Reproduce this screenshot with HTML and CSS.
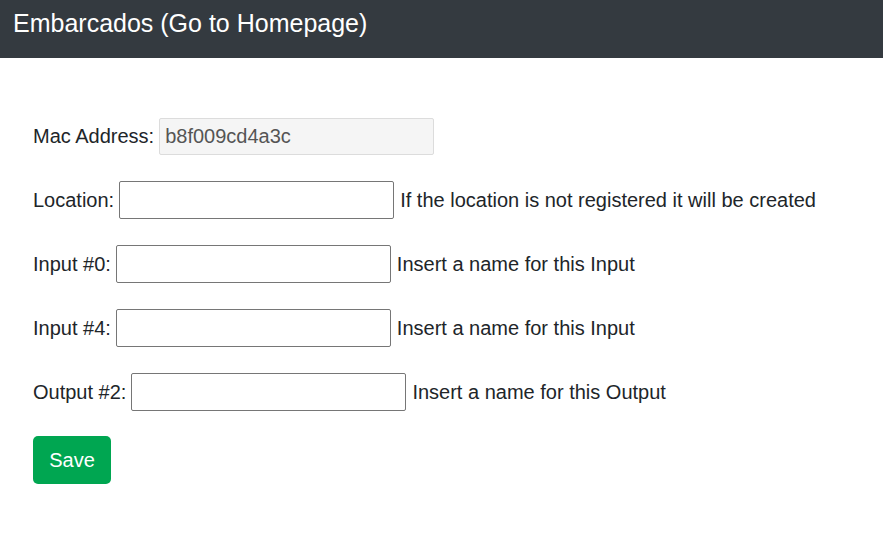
FILE: index.html
```html
<!DOCTYPE html>
<html>
<head>
<meta charset="utf-8">
<link rel="stylesheet" href="styles.css">
</head>
<body>
<header class="topbar">
  <a class="brand" href="#">Embarcados (Go to Homepage)</a>
</header>
<main class="content">
  <form class="form">
    <div class="row">
      <label class="label">Mac Address:</label>
      <input class="field field-readonly" type="text" value="b8f009cd4a3c" readonly>
    </div>
    <div class="row">
      <label class="label">Location:</label>
      <input class="field" type="text">
      <span class="hint">If the location is not registered it will be created</span>
    </div>
    <div class="row">
      <label class="label">Input #0:</label>
      <input class="field" type="text">
      <span class="hint">Insert a name for this Input</span>
    </div>
    <div class="row">
      <label class="label">Input #4:</label>
      <input class="field" type="text">
      <span class="hint">Insert a name for this Input</span>
    </div>
    <div class="row">
      <label class="label">Output #2:</label>
      <input class="field" type="text">
      <span class="hint">Insert a name for this Output</span>
    </div>
    <button class="btn-save" type="button">Save</button>
  </form>
</main>
</body>
</html>
```
FILE: styles.css
```css
html, body {
  margin: 0;
  padding: 0;
  background: #ffffff;
  font-family: "Liberation Sans", Arial, sans-serif;
  color: #212529;
}
.topbar {
  height: 58px;
  background: #343a40;
  box-sizing: border-box;
  padding: 6px 13px 0 13px;
}
.brand {
  color: #ffffff;
  text-decoration: none;
  font-size: 25px;
  line-height: 34px;
}
.content {
  padding: 60px 33px 0 33px;
}
.form {
  display: flex;
  flex-direction: column;
  align-items: flex-start;
  gap: 26px;
}
.row {
  display: flex;
  align-items: baseline;
  font-size: 20px;
}
.label {
  margin-right: 5px;
}
.field {
  box-sizing: border-box;
  width: 275px;
  height: 38px;
  border: 1px solid #767676;
  border-radius: 2px;
  padding: 0 5px;
  font-family: "Liberation Sans", Arial, sans-serif;
  font-size: 20px;
  background: #ffffff;
  color: #212529;
}
.field-readonly {
  height: 37px;
  background: #f5f5f5;
  border-color: #dcdcdc;
  color: #555555;
}
.hint {
  margin-left: 6px;
}
.btn-save {
  margin-top: -1px;
  background: #00a651;
  color: #ffffff;
  border: none;
  border-radius: 5px;
  font-family: "Liberation Sans", Arial, sans-serif;
  font-size: 20px;
  line-height: 24px;
  padding: 11px 16px 12px;
  width: 78px;
  height: 48px;
}
```
